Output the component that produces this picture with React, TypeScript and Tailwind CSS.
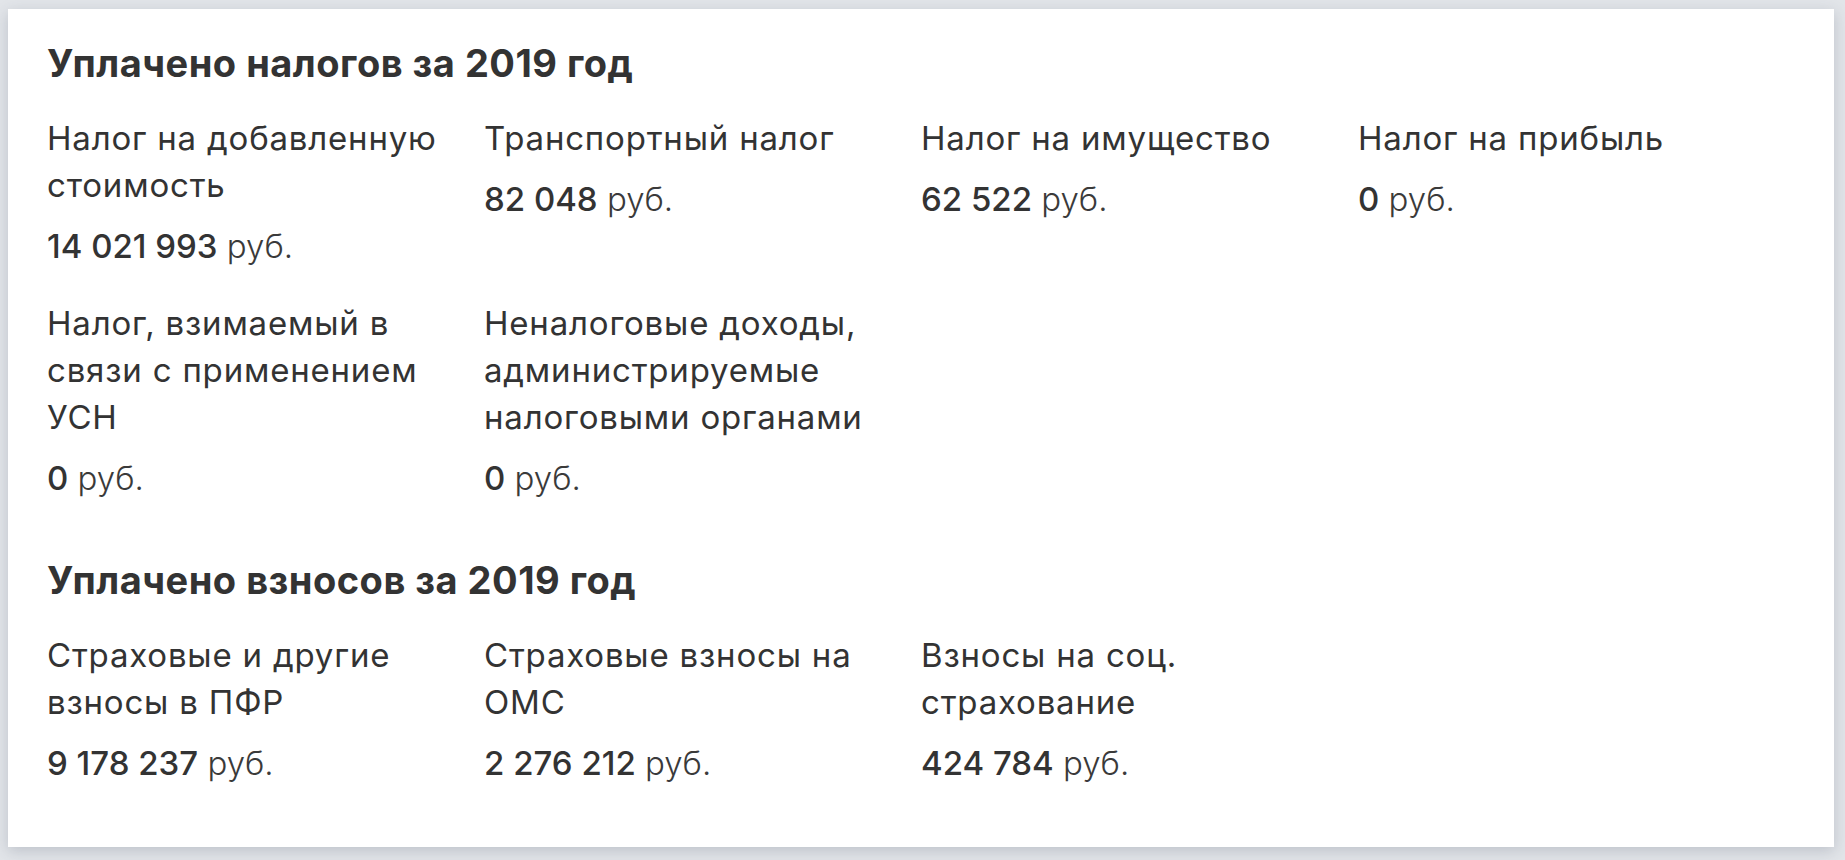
type Item = { label: string; value: string }

const taxes: Item[] = [
  { label: "Налог на добавленную стоимость", value: "14 021 993" },
  { label: "Транспортный налог", value: "82 048" },
  { label: "Налог на имущество", value: "62 522" },
  { label: "Налог на прибыль", value: "0" },
  { label: "Налог, взимаемый в связи с применением УСН", value: "0" },
  { label: "Неналоговые доходы, администрируемые налоговыми органами", value: "0" },
]

const fees: Item[] = [
  { label: "Страховые и другие взносы в ПФР", value: "9 178 237" },
  { label: "Страховые взносы на ОМС", value: "2 276 212" },
  { label: "Взносы на соц. страхование", value: "424 784" },
]

function Section({ title, items }: { title: string; items: Item[] }) {
  return (
    <div>
      <h2 className="text-[38px] leading-[47px] font-bold tracking-[0.5px] text-[#333333]">{title}</h2>
      <div className="mt-[28px] grid grid-cols-4 gap-y-[30px]">
        {items.map((item) => (
          <div key={item.label} className="pr-[24px]">
            <div className="text-[33px] leading-[47px] tracking-[0.8px] text-[#333333]">{item.label}</div>
            <div className="mt-[14px] text-[33px] leading-[47px] text-[#333333]">
              <span className="font-medium">{item.value}</span>{" "}
              <span className="font-light text-[#3a3a3a]">руб.</span>
            </div>
          </div>
        ))}
      </div>
    </div>
  )
}

export default function App() {
  return (
    <div
      className="h-[860px] w-full overflow-hidden bg-[#e2e5e9] pl-[8px] pr-[11px] pt-[9px]"
      style={{ fontFamily: "Inter, 'Noto Sans', sans-serif" }}
    >
      <div className="bg-white px-[39px] pt-[31px] pb-[60px] shadow-[0_4px_14px_rgba(60,70,90,0.22)]">
        <Section title="Уплачено налогов за 2019 год" items={taxes} />
        <div className="mt-[55px]">
          <Section title="Уплачено взносов за 2019 год" items={fees} />
        </div>
      </div>
    </div>
  )
}
